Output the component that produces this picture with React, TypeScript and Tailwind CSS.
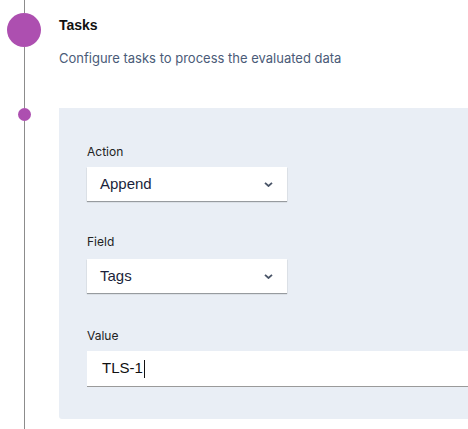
import React from "react";

const Chevron = () => (
  <svg width="9" height="5" viewBox="0 0 9 5" fill="none">
    <path d="M1 0.8l3.5 3.2 3.5-3.2" stroke="#4a5568" strokeWidth="1.8" />
  </svg>
);

const SelectBox = ({ value }: { value: string }) => (
  <div className="w-[200px] h-[34px] bg-white flex items-center justify-between pl-[13px] pr-[14px] shadow-[0_1px_1px_rgba(0,0,0,0.35)]">
    <span className="text-[15px] text-[#1b1f3b]">{value}</span>
    <Chevron />
  </div>
);

const labelCls = "block text-[12px] leading-[16px] text-[#222]";

export default function App() {
  return (
    <div
      className="w-[468px] h-[429px] bg-white flex overflow-hidden"
      style={{ fontFamily: '"Liberation Sans", Arial, sans-serif' }}
    >
      {/* Timeline */}
      <div className="w-[59px] shrink-0 flex flex-col items-start">
        <div className="ml-[24px] w-px h-[13px] bg-[#8c8c8c]" />
        <div className="ml-[7px] w-[34px] h-[34px] rounded-full bg-[#ad4fb0]" />
        <div className="ml-[24px] w-px h-[61px] bg-[#8c8c8c]" />
        <div className="ml-[18px] w-[13px] h-[13px] rounded-full bg-[#ad4fb0]" />
        <div className="ml-[24px] w-px flex-1 bg-[#8c8c8c]" />
      </div>

      {/* Content */}
      <div className="flex flex-col pt-[15px]">
        <h2 className="text-[14px] leading-[20px] font-bold text-[#111]">Tasks</h2>
        <p className="mt-[13px] text-[13px] leading-[20px] text-[#4a5b78] whitespace-nowrap font-['Inter',sans-serif]">
          Configure tasks to process the evaluated data
        </p>

        <div className="mt-[40px] w-[440px] bg-[#e9eef5] rounded-bl-[3px] pl-[28px] pt-[36px] pb-[32px] font-['Inter',sans-serif]">
          <label className={labelCls}>Action</label>
          <div className="mt-[7px] font-['Liberation_Sans',Arial,sans-serif]">
            <SelectBox value="Append" />
          </div>

          <label className={`${labelCls} mt-[33px]`}>Field</label>
          <div className="mt-[9px] font-['Liberation_Sans',Arial,sans-serif]">
            <SelectBox value="Tags" />
          </div>

          <label className={`${labelCls} mt-[35px]`}>Value</label>
          <div className="mt-[7px] h-[36px] bg-white border-b border-[#9a9a9a] flex items-center pl-[15px] font-['Liberation_Sans',Arial,sans-serif]">
            <span className="text-[15px] text-[#111]">TLS-1</span>
            <span className="w-px h-[18px] bg-[#111] ml-[1px]" />
          </div>
        </div>
      </div>
    </div>
  );
}
